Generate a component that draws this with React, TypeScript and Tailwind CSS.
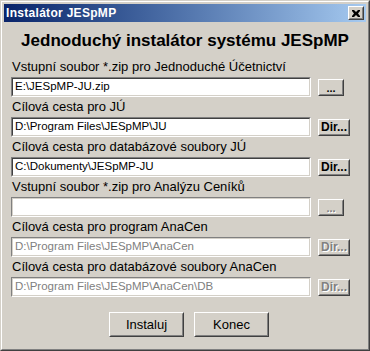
import React from "react";

const F = { fontFamily: '"Liberation Sans", Arial, sans-serif' };

function Edit({ value, disabled }: { value: string; disabled?: boolean }) {
  return (
    <div className="w-[300px] h-[20px] border border-t-[#808080] border-l-[#808080] border-b-white border-r-white">
      <div
        className={
          "w-full h-full border bg-white flex items-center pl-[2px] text-[11.5px] leading-none " +
          (disabled
            ? "border-t-[#d4d0c8] border-l-[#d4d0c8] border-b-[#d4d0c8] border-r-[#d4d0c8] text-[#808080]"
            : "border-t-[#404040] border-l-[#404040] border-b-[#d4d0c8] border-r-[#d4d0c8] text-black")
        }
      >
        {value}
      </div>
    </div>
  );
}

function Btn({
  children,
  w,
  h,
  disabled,
  bold,
  size,
}: {
  children: React.ReactNode;
  w: string;
  h: string;
  disabled?: boolean;
  bold?: boolean;
  size: string;
}) {
  return (
    <div className={`${w} ${h} border border-t-white border-l-white border-b-[#404040] border-r-[#404040] bg-[#d4d0c8]`}>
      <div
        className={
          "w-full h-full border border-t-[#d4d0c8] border-l-[#d4d0c8] border-b-[#808080] border-r-[#808080] flex items-center justify-center leading-none " +
          size +
          (bold ? " font-bold" : "") +
          (disabled ? " text-[#808080] [text-shadow:1px_1px_0_#ffffff]" : " text-black")
        }
      >
        {children}
      </div>
    </div>
  );
}

function Row({
  label,
  value,
  btn,
  disabled,
}: {
  label: string;
  value: string;
  btn: "dots" | "dir";
  disabled?: boolean;
}) {
  return (
    <div className="flex flex-col">
      <div className="h-[16px] pl-[1px] text-[13px] leading-[16px] text-black whitespace-nowrap">{label}</div>
      <div className="mt-[2px] flex items-center gap-[7px]">
        <Edit value={value} disabled={disabled} />
        {btn === "dots" ? (
          <Btn w="w-[26px]" h="h-[17px]" disabled={disabled} size="text-[11px] font-bold pt-[3px]">
            ...
          </Btn>
        ) : (
          <Btn w="w-[32px]" h="h-[17px]" disabled={disabled} bold size="text-[12px]">
            Dir...
          </Btn>
        )}
      </div>
    </div>
  );
}

export default function App() {
  return (
    <div style={F} className="w-[370px] h-[351px] border border-t-[#d4d0c8] border-l-[#d4d0c8] border-b-[#404040] border-r-[#404040] bg-[#d4d0c8]">
      <div className="w-full h-full border border-t-white border-l-white border-b-[#808080] border-r-[#808080] p-[2px] flex flex-col">
        <div className="h-[18px] flex items-center justify-between bg-gradient-to-r from-[#0a246a] to-[#a6caf0] pl-[2px] pr-[2px]">
          <span className="text-white font-bold text-[12px] tracking-[0.3px] leading-none">Instalátor JESpMP</span>
          <div className="w-[16px] h-[14px] border border-t-white border-l-white border-b-[#404040] border-r-[#404040] bg-[#d4d0c8]">
            <div className="w-full h-full border border-t-[#d4d0c8] border-l-[#d4d0c8] border-b-[#808080] border-r-[#808080] flex items-center justify-center">
              <svg width="8" height="7" viewBox="0 0 8 7">
                <path d="M0 0h2l2 2 2-2h2v1L6 3.5 8 6v1H6L4 5 2 7H0V6l2-2.5L0 1z" fill="#000" />
              </svg>
            </div>
          </div>
        </div>
        <div className="mt-[9px] h-[20px] text-center text-[17px] leading-[20px] font-bold text-black whitespace-nowrap">
          Jednoduchý instalátor systému JESpMP
        </div>
        <div className="mt-[8px] pl-[7px] flex flex-col gap-[2px]">
          <Row label="Vstupní soubor *.zip pro Jednoduché Účetnictví" value="E:\JESpMP-JU.zip" btn="dots" />
          <Row label="Cílová cesta pro JÚ" value="D:\Program Files\JESpMP\JU" btn="dir" />
          <Row label="Cílová cesta pro databázové soubory JÚ" value="C:\Dokumenty\JESpMP-JU" btn="dir" />
          <Row label="Vstupní soubor *.zip pro Analýzu Ceníků" value="" btn="dots" disabled />
          <Row label="Cílová cesta pro program AnaCen" value="D:\Program Files\JESpMP\AnaCen" btn="dir" disabled />
          <Row label="Cílová cesta pro databázové soubory AnaCen" value="D:\Program Files\JESpMP\AnaCen\DB" btn="dir" disabled />
        </div>
        <div className="mt-[15px] flex justify-center gap-[10px] pl-[8px]">
          <Btn w="w-[75px]" h="h-[25px]" size="text-[13px]">
            Instaluj
          </Btn>
          <Btn w="w-[75px]" h="h-[25px]" size="text-[13px]">
            Konec
          </Btn>
        </div>
      </div>
    </div>
  );
}
